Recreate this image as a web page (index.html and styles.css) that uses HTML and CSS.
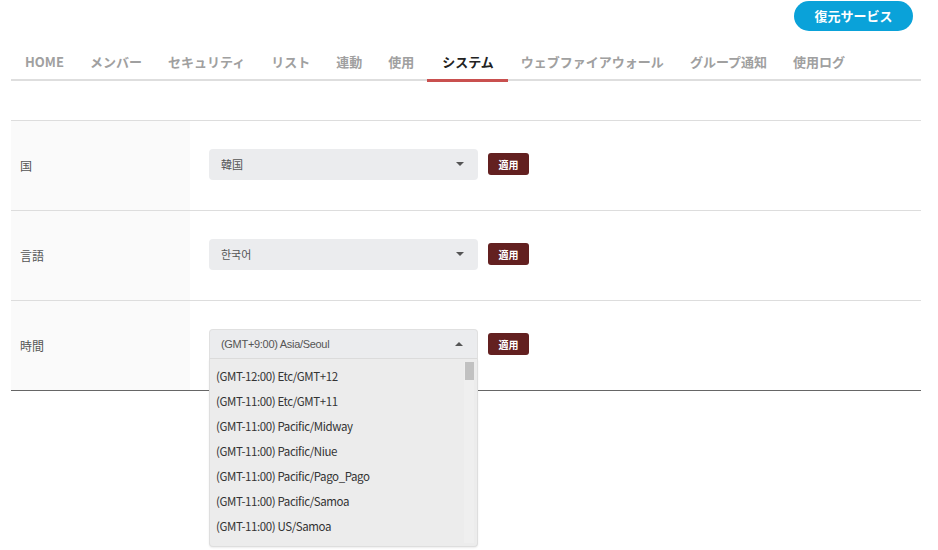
FILE: index.html
```html
<!DOCTYPE html>
<html lang="ja">
<head>
<meta charset="utf-8">
<link rel="stylesheet" href="styles.css">
</head>
<body>
<div class="page">
  <div class="topbar">
    <button class="restore">復元サービス</button>
  </div>
  <nav class="tabs">
    <a class="tab">HOME</a>
    <a class="tab">メンバー</a>
    <a class="tab">セキュリティ</a>
    <a class="tab">リスト</a>
    <a class="tab">連動</a>
    <a class="tab">使用</a>
    <a class="tab active">システム</a>
    <a class="tab">ウェブファイアウォール</a>
    <a class="tab">グループ通知</a>
    <a class="tab">使用ログ</a>
  </nav>
  <div class="table">
    <div class="row">
      <div class="label">国</div>
      <div class="value">
        <div class="select"><span class="sel-text cjk">韓国</span><span class="caret down"></span></div>
        <button class="apply">適用</button>
      </div>
    </div>
    <div class="row">
      <div class="label">言語</div>
      <div class="value">
        <div class="select"><span class="sel-text cjk">한국어</span><span class="caret down"></span></div>
        <button class="apply">適用</button>
      </div>
    </div>
    <div class="row last">
      <div class="label">時間</div>
      <div class="value">
        <div class="select-wrap">
          <div class="select open"><span class="sel-text">(GMT+9:00) Asia/Seoul</span><span class="caret up"></span></div>
          <div class="dropdown">
            <ul class="options">
              <li>(GMT-12:00) Etc/GMT+12</li>
              <li>(GMT-11:00) Etc/GMT+11</li>
              <li>(GMT-11:00) Pacific/Midway</li>
              <li>(GMT-11:00) Pacific/Niue</li>
              <li>(GMT-11:00) Pacific/Pago_Pago</li>
              <li>(GMT-11:00) Pacific/Samoa</li>
              <li>(GMT-11:00) US/Samoa</li>
            </ul>
            <div class="scrollbar"><div class="thumb"></div></div>
          </div>
        </div>
        <button class="apply">適用</button>
      </div>
    </div>
  </div>
</div>
</body>
</html>
```
FILE: styles.css
```css
* { box-sizing: border-box; }
html, body { margin: 0; padding: 0; background: #fff; }
body {
  font-family: "Noto Sans CJK JP", "Liberation Sans", sans-serif;
  color: #333;
  min-height: 550px;
}
.page {
  width: 938px;
  min-height: 550px;
  padding: 0 17px 0 11px;
}
.topbar {
  display: flex;
  justify-content: flex-end;
  padding-top: 1px;
  padding-right: 8px;
}
.restore {
  width: 119px;
  height: 30px;
  border: none;
  border-radius: 15px;
  background: #0aa2d9;
  color: #fff;
  font-family: "Noto Sans CJK JP", sans-serif;
  font-weight: 700;
  font-size: 13px;
  padding: 0;
  line-height: 30px;
}
.tabs {
  display: flex;
  margin-top: 14px;
  height: 36px;
  border-bottom: 2px solid #dedede;
}
.tab {
  display: block;
  padding: 0 13px;
  font-size: 13px;
  font-weight: 700;
  line-height: 34px;
  color: #a0a0a0;
  white-space: nowrap;
}
.tab:first-child { padding-left: 14px; }
.tab.active {
  color: #222;
  border-bottom: 3px solid #c9504f;
  height: 37px;
  padding: 0 14px 0 15px;
}
.table {
  margin-top: 39px;
  border-top: 1px solid #dddddd;
  border-bottom: 1px solid #666;
}
.row {
  display: flex;
  height: 90px;
  border-bottom: 1px solid #dddddd;
}
.row.last { border-bottom: none; height: 89px; }
.label {
  width: 179px;
  background: #fafafa;
  display: flex;
  align-items: center;
  padding-left: 9px;
  font-size: 12px;
  color: #555;
}
.value {
  display: flex;
  align-items: center;
  padding-left: 19px;
  gap: 10px;
}
.select {
  width: 269px;
  height: 31px;
  background: #ebecee;
  border-radius: 4px;
  display: flex;
  align-items: center;
  justify-content: space-between;
  padding: 0 14px 0 12px;
  margin-top: -3px;
}
.sel-text {
  font-family: "Liberation Sans", "Noto Sans CJK JP", sans-serif;
  font-size: 11px;
  letter-spacing: -0.3px;
  color: #555;
}
.sel-text.cjk {
  font-family: "Noto Sans CJK JP", "Noto Sans CJK KR", sans-serif;
  letter-spacing: 0;
}
.caret {
  width: 0; height: 0;
  border-left: 4px solid transparent;
  border-right: 4px solid transparent;
}
.caret.down { border-top: 4px solid #555; }
.caret.up { border-bottom: 4px solid #555; }
.select-wrap { position: relative; margin-top: -3px; z-index: 5; }
.select.open {
  margin-top: 0;
  height: 30px;
  border-radius: 4px 4px 0 0;
  border: 1px solid #e0e0e0;
  border-bottom: 1px solid #dcdcdc;
  padding-left: 11px;
}
.dropdown {
  position: absolute;
  top: 30px;
  left: 0;
  z-index: 10;
  width: 269px;
  height: 188px;
  background: #ececec;
  border: 1px solid #dedede;
  border-top: none;
  border-radius: 0 0 4px 4px;
  box-shadow: 0 1px 2px rgba(0,0,0,0.08);
}
.options {
  list-style: none;
  margin: 0;
  padding: 5px 0 0 6px;
  height: 183px;
  overflow: hidden;
}
.options li {
  height: 25px;
  line-height: 24px;
  font-family: "Noto Sans CJK JP", sans-serif;
  font-size: 11.5px;
  letter-spacing: -0.4px;
  color: #333;
  white-space: nowrap;
}
.scrollbar {
  position: absolute;
  top: 3px;
  right: 3px;
  width: 10px;
  bottom: 3px;
  background: #efefef;
}
.thumb {
  margin: 0 auto;
  width: 9px;
  height: 18px;
  background: #c1c1c1;
}
.apply {
  width: 41px;
  height: 22px;
  border: none;
  border-radius: 3px;
  background: #632020;
  color: #fff;
  font-family: "Noto Sans CJK JP", sans-serif;
  font-weight: 700;
  font-size: 10px;
  padding: 0;
  margin-top: -3px;
}
```
